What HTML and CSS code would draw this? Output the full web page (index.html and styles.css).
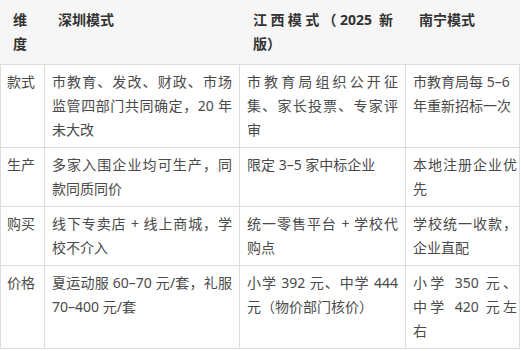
FILE: index.html
```html
<!DOCTYPE html>
<html lang="zh-CN">
<head>
<meta charset="utf-8">
<title>校服模式对比</title>
<link rel="stylesheet" href="styles.css">
</head>
<body>
<div class="table">
  <div class="th first">维度</div>
  <div class="th">深圳模式</div>
  <div class="th"><span class="ln">江西模式（2025 新</span>版）</div>
  <div class="th">南宁模式</div>

  <div class="td first">款式</div>
  <div class="td"><span class="ln">市教育、发改、财政、市场</span><span class="ln">监管四部门共同确定，20 年</span>未大改</div>
  <div class="td"><span class="ln">市教育局组织公开征</span><span class="ln">集、家长投票、专家评</span>审</div>
  <div class="td last">市教育局每 5–6<br>年重新招标一次</div>

  <div class="td first">生产</div>
  <div class="td"><span class="ln">多家入围企业均可生产，同</span>款同质同价</div>
  <div class="td">限定 3–5 家中标企业</div>
  <div class="td last"><span class="ln">本地注册企业优</span>先</div>

  <div class="td first">购买</div>
  <div class="td"><span class="ln">线下专卖店 + 线上商城，学</span>校不介入</div>
  <div class="td"><span class="ln">统一零售平台 + 学校代</span>购点</div>
  <div class="td last"><span class="ln">学校统一收款，</span>企业直配</div>

  <div class="td first">价格</div>
  <div class="td"><span class="ln">夏运动服 60–70 元/套，礼服</span>70–400 元/套</div>
  <div class="td"><span class="ln">小学 392 元、中学 444</span>元（物价部门核价）</div>
  <div class="td last"><span class="ln">小学 350 元、</span><span class="ln">中学 420 元左</span>右</div>
</div>
</body>
</html>
```

FILE: styles.css
```css
html, body {
  margin: 0;
  padding: 0;
  background: #ffffff;
}

body {
  font-family: "Noto Sans", "Noto Sans CJK SC", sans-serif;
  font-size: 14px;
  line-height: 24px;
  color: #4a4a4a;
}

.table {
  display: grid;
  grid-template-columns: 45px 195px 166px 114px;
  width: 520px;
}

.th {
  box-sizing: border-box;
  background: #f6f6f6;
  padding: 8px 13px;
  font-weight: bold;
  color: #333333;
  text-align: justify;
  border-bottom: 1px solid #dddddd;
}

.td {
  box-sizing: border-box;
  padding: 5px 7px;
  text-align: justify;
  border-right: 1px solid #dddddd;
  border-bottom: 1px solid #dddddd;
}

.td.first {
  border-left: 1px solid #dddddd;
  padding-left: 6px;
}

.td.last {
  padding-right: 2px;
}

.ln {
  display: block;
  white-space: nowrap;
  text-align-last: justify;
}
```
